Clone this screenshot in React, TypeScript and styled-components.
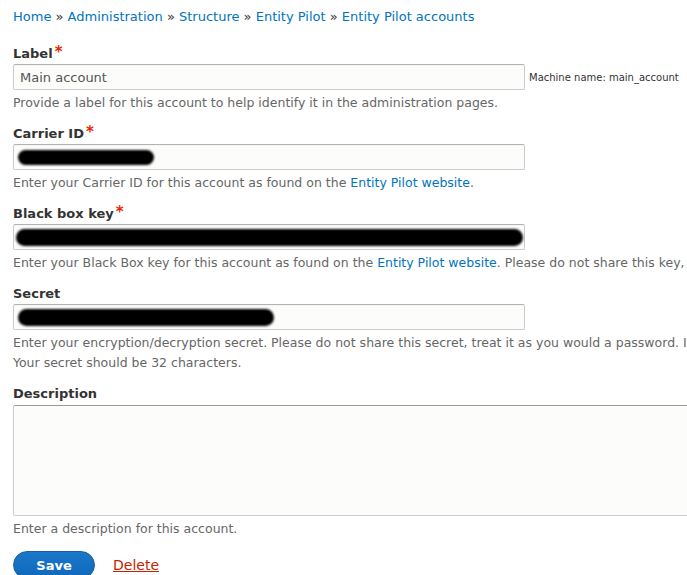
import styled, { createGlobalStyle } from "styled-components";

const GlobalStyle = createGlobalStyle`
  html, body {
    margin: 0;
    padding: 0;
    background: #ffffff;
    overflow: hidden;
  }
  body {
    font-family: "DejaVu Sans", Verdana, sans-serif;
    color: #333;
  }
`;

function App() {
  return (
    <Page>
      <GlobalStyle />
      <Breadcrumb>
        <Link href="#">Home</Link> » <Link href="#">Administration</Link> » <Link href="#">Structure</Link> »{" "}
        <Link href="#">Entity Pilot</Link> » <Link href="#">Entity Pilot accounts</Link>
      </Breadcrumb>

      <Form>
        <Item>
          <Label>
            Label<Star>*</Star>
          </Label>
          <InlineRow>
            <TextInput defaultValue="Main account" />
            <MachineName>Machine name: main_account</MachineName>
          </InlineRow>
          <Help>Provide a label for this account to help identify it in the administration pages.</Help>
        </Item>

        <Item>
          <Label>
            Carrier ID<Star>*</Star>
          </Label>
          <MaskedInput>
            <Blob style={{ width: 136 }} />
          </MaskedInput>
          <Help>
            Enter your Carrier ID for this account as found on the <Link href="#">Entity Pilot website</Link>.
          </Help>
        </Item>

        <Item>
          <Label>
            Black box key<Star>*</Star>
          </Label>
          <MaskedInput>
            <Blob style={{ width: 507, left: 2 }} $thick />
          </MaskedInput>
          <Help $nowrap>
            Enter your Black Box key for this account as found on the <Link href="#">Entity Pilot website</Link>. Please do
            not share this key, treat it as you would a password.
          </Help>
        </Item>

        <Item>
          <Label>Secret</Label>
          <MaskedInput>
            <Blob style={{ width: 256 }} $thick />
          </MaskedInput>
          <Help $nowrap>
            Enter your encryption/decryption secret. Please do not share this secret, treat it as you would a password. It
            is used to encrypt your content.
            <br />
            Your secret should be 32 characters.
          </Help>
        </Item>

        <Item>
          <Label>Description</Label>
          <TextArea />
          <Help>Enter a description for this account.</Help>
        </Item>

        <Actions>
          <SaveButton>Save</SaveButton>
          <DeleteLink href="#">Delete</DeleteLink>
        </Actions>
      </Form>
    </Page>
  );
}

export default App;

const Page = styled.div`
  padding: 8px 0 0 13px;
  width: 700px;
  box-sizing: border-box;
`;

const Link = styled.a`
  color: #0074bd;
  text-decoration: none;
`;

const Breadcrumb = styled.div`
  font-size: 13px;
  line-height: 18px;
  color: #333;
  white-space: nowrap;
`;

const Form = styled.div`
  margin-top: 19px;
  display: flex;
  flex-direction: column;
`;

const Item = styled.div`
  display: flex;
  flex-direction: column;
  margin-bottom: 12px;
`;

const Label = styled.label`
  font-size: 13px;
  font-weight: bold;
  line-height: 18px;
  margin-bottom: 1px;
  color: #333;
`;

const Star = styled.span`
  color: #e62600;
  font-weight: bold;
  font-size: 15px;
  margin-left: 2px;
  vertical-align: 1px;
  line-height: 10px;
`;

const InlineRow = styled.div`
  display: flex;
  align-items: center;
  gap: 4px;
`;

const inputBase = `
  width: 512px;
  height: 26px;
  box-sizing: border-box;
  border: 1px solid #ccc;
  border-top-color: #b3b3b3;
  border-radius: 2px;
  background: #fcfcfa;
  box-shadow: inset 0 1px 1px rgba(0, 0, 0, 0.03);
`;

const TextInput = styled.input`
  ${inputBase}
  padding: 0 6px;
  font-family: "DejaVu Sans", Verdana, sans-serif;
  font-size: 13px;
  color: #555;
  outline: none;
`;

const MaskedInput = styled.div`
  ${inputBase}
  position: relative;
`;

const Blob = styled.span<{ $thick?: boolean }>`
  position: absolute;
  left: 4px;
  top: ${(p) => (p.$thick ? 4 : 5)}px;
  height: ${(p) => (p.$thick ? 17 : 15)}px;
  background: #000;
  border-radius: 9px;
  filter: blur(1px);
`;

const MachineName = styled.span`
  font-size: 10px;
  color: #333;
  white-space: nowrap;
`;

const Help = styled.div<{ $nowrap?: boolean }>`
  font-size: 12.5px;
  line-height: 20px;
  color: #666;
  margin-top: 3px;
  white-space: ${(p) => (p.$nowrap ? "nowrap" : "normal")};
`;

const TextArea = styled.textarea`
  width: 700px;
  height: 111px;
  margin-top: 1px;
  box-sizing: border-box;
  border: 1px solid #ccc;
  border-top-color: #999;
  border-radius: 2px;
  background: #fcfcfa;
  resize: none;
  outline: none;
`;

const Actions = styled.div`
  display: flex;
  align-items: center;
  gap: 18px;
`;

const SaveButton = styled.button`
  width: 82px;
  height: 28px;
  border: 1px solid #1a5f9e;
  border-radius: 20px;
  background: linear-gradient(#1a78c9, #1068bb);
  color: #fff;
  font-family: "DejaVu Sans", Verdana, sans-serif;
  font-weight: bold;
  font-size: 13px;
  cursor: pointer;
`;

const DeleteLink = styled.a`
  color: #c72100;
  font-size: 14px;
  text-decoration: underline;
`;
